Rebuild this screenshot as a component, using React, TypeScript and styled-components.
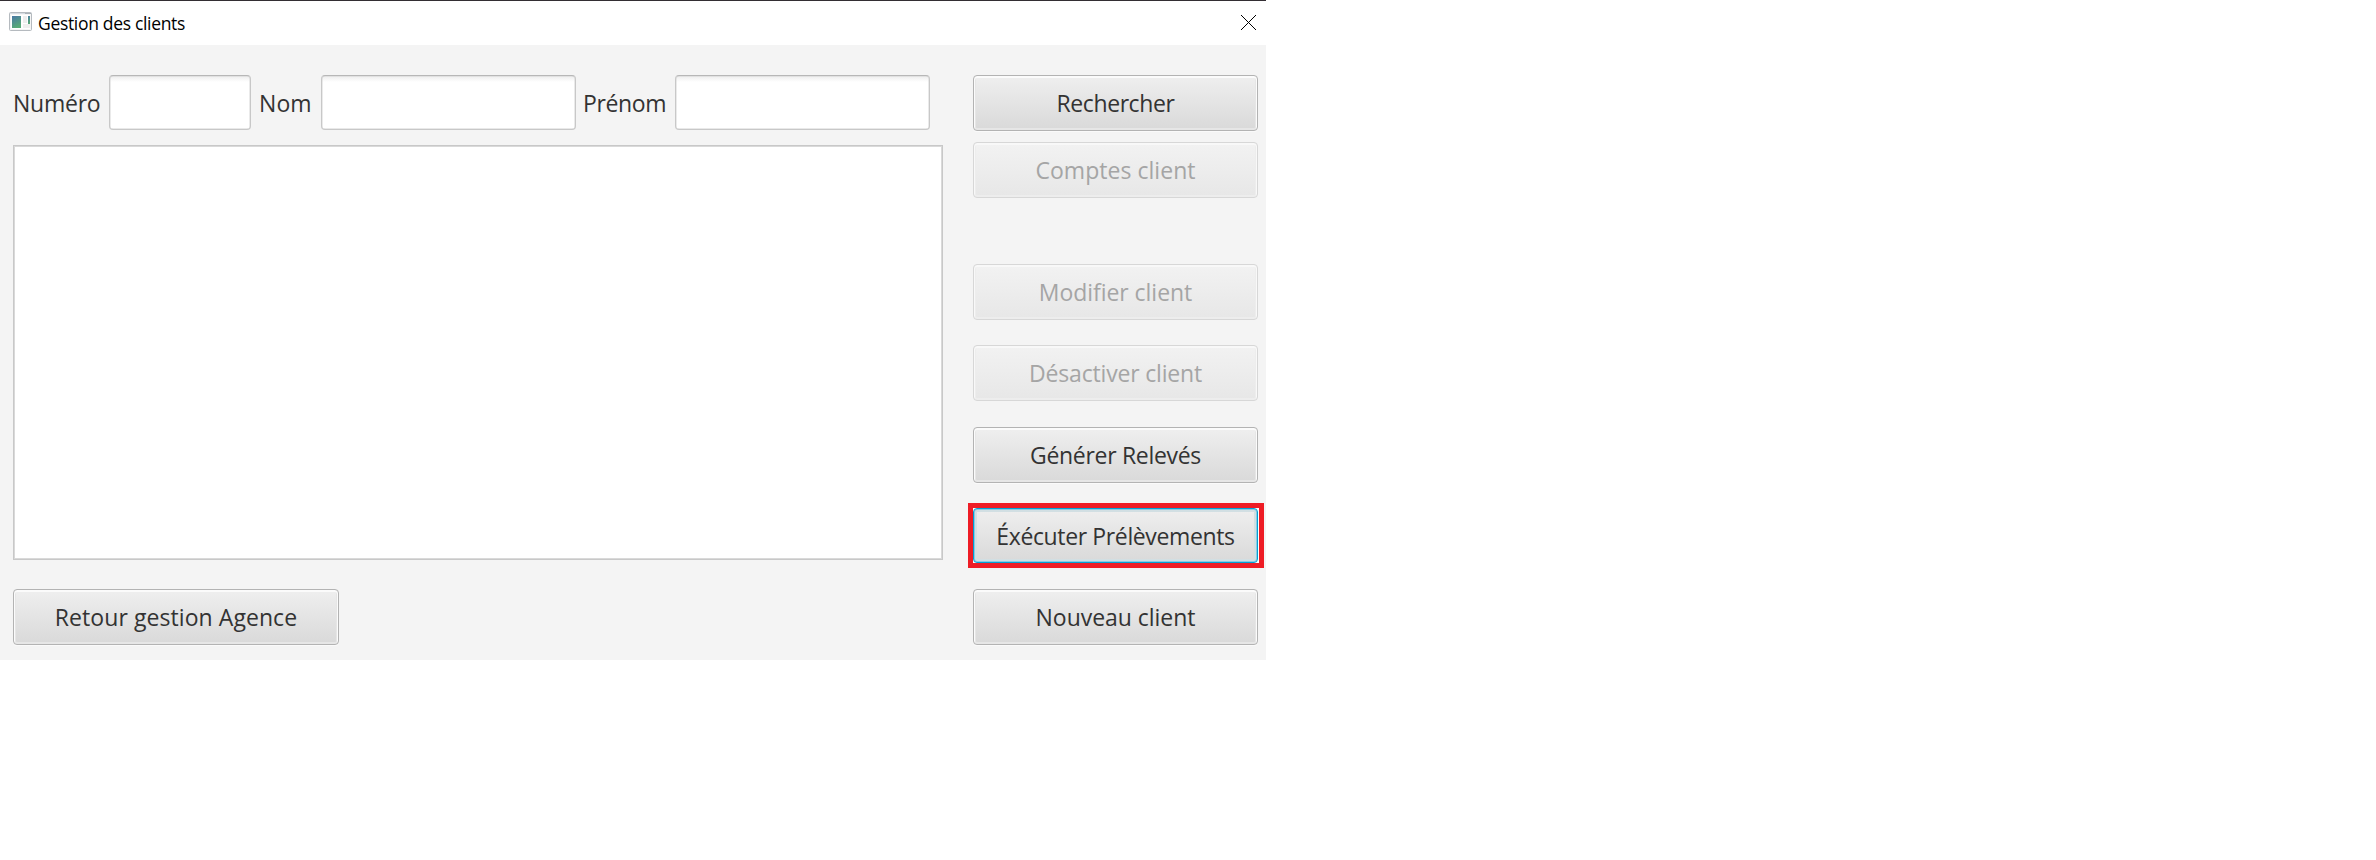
import React from "react";
import styled, { createGlobalStyle, css } from "styled-components";

const GlobalStyle = createGlobalStyle`
  * { box-sizing: border-box; }
  body { margin: 0; background: #fff; }
  button, input { font: inherit; color: inherit; }
`;

const Dialog = styled.main`
  width: 1266px;
  height: 660px;
  display: flex;
  flex-direction: column;
  background: #f4f4f4;
  color: #333;
  font-family: "Segoe UI", "Open Sans", sans-serif;
  font-size: 23px;
  font-weight: 370;
`;

const TitleBar = styled.header`
  height: 45px;
  flex: none;
  display: flex;
  align-items: flex-start;
  padding: 0 9px;
  border-top: 1px solid #332e33;
  background: #fff;
  color: #000;
`;

const Title = styled.h1<{ $spacing: number }>`
  margin: 10px auto 0 6px;
  font-size: 17.5px;
  font-weight: 370;
  line-height: 24px;
  letter-spacing: ${(p) => p.$spacing}px;
`;

const AppIcon = styled.svg`
  display: block;
  margin-top: 11px;
`;

const CloseIcon = styled.svg`
  display: block;
  margin-top: 13px;
`;

const Content = styled.div`
  flex: 1;
  display: flex;
  justify-content: space-between;
  padding: 30px 8px 15px 13px;
`;

const MainColumn = styled.section`
  width: 930px;
  display: flex;
  flex-direction: column;
  align-items: flex-start;
`;

const SearchRow = styled.div`
  display: flex;
  align-items: center;
  height: 55px;
  margin-bottom: 15px;
`;

const Label = styled.label<{ $width: number; $spacing: number }>`
  width: ${(p) => p.$width}px;
  flex: none;
  white-space: nowrap;
  line-height: 32px;
  letter-spacing: ${(p) => p.$spacing}px;
`;

const Field = styled.input<{ $width: number; $gap?: number }>`
  width: ${(p) => p.$width}px;
  height: 55px;
  margin: 0 ${(p) => p.$gap ?? 0}px 0 0;
  padding: 0 10px;
  border: 1px solid #c8c8c8;
  border-top-color: #b7b7b7;
  border-radius: 4px;
  outline: none;
  background: linear-gradient(#ededed, #fff 6px);
  box-shadow: inset 0 0 0 0.5px #d4d4d4;
`;

const ClientList = styled.div`
  width: 930px;
  height: 415px;
  margin-bottom: 29px;
  border: 1px solid #c8c8c8;
  box-shadow: inset 0 0 0 1px #d9d9d9;
  background: #fff;
`;

const Actions = styled.aside`
  width: 285px;
  display: flex;
  flex-direction: column;
`;

const ActionButton = styled.button<{
  $spacing: number;
  $top?: number;
  $width?: number;
  $focused?: boolean;
}>`
  width: ${(p) => p.$width ?? 285}px;
  height: 56px;
  flex: none;
  margin: ${(p) => p.$top ?? 0}px 0 0;
  padding: 0 0 1px;
  border: 1px solid #b3b3b3;
  border-radius: 4px;
  background: linear-gradient(#efefef, #d9d9d9);
  box-shadow: inset 0 1px 0 1px #fbfbfb, inset 0 0 0 2px #e6e6e6, 0 1px 0 #fafafa;
  white-space: nowrap;
  line-height: 32px;
  letter-spacing: ${(p) => p.$spacing}px;

  &:disabled {
    border-color: #d7d7d7;
    background: linear-gradient(#f2f2f2, #e7e7e7);
    box-shadow: inset 0 1px 0 1px #f8f8f8, inset 0 0 0 2px #ededed;
    color: #a5a5a5;
  }

  ${(p) =>
    p.$focused &&
    css`
      display: block;
      height: 55px;
      padding: 0;
      border-color: #039ed3;
      box-shadow: inset 0 0 0 1px #87cce3, inset 0 0 0 3px #d2dfe3;
    `}
`;

const Highlight = styled.div`
  margin: 20px -6px 21px -5px;
  padding-right: 1px;
  height: 65px;
  flex: none;
  border: 5px solid #ee1c25;
  background: #fff;
`;

export default function App() {
  return (
    <>
      <GlobalStyle />
      <Dialog>
        <TitleBar>
          <AppIcon width="23" height="19" viewBox="0 0 23 19">
            <defs>
              <linearGradient id="pane" x1="0" y1="0" x2="0.4" y2="1">
                <stop offset="0" stopColor="#4978a5" />
                <stop offset="1" stopColor="#58aa76" />
              </linearGradient>
            </defs>
            <rect x="0.5" y="0.5" width="22" height="18" rx="1" fill="#f5f5f5" stroke="#b5babf" />
            <path d="M1 1.5h15" stroke="#d6dbe2" />
            <path d="M16 1.5h6" stroke="#a9b1b8" />
            <rect x="2" y="3" width="19" height="14" fill="#fff" />
            <rect x="3" y="4" width="9" height="12" fill="url(#pane)" />
            <rect x="14" y="4" width="4" height="7" fill="#ededed" />
            <rect x="14" y="12" width="7" height="4" fill="#efefef" />
            <rect x="19" y="4" width="2" height="8" fill="url(#pane)" />
          </AppIcon>
          <Title $spacing={-0.32}>Gestion des clients</Title>
          <CloseIcon width="17" height="17" viewBox="0 0 17 17">
            <path d="M1 1L16 16M16 1L1 16" stroke="#000" strokeWidth="1" />
          </CloseIcon>
        </TitleBar>
        <Content>
          <MainColumn>
            <SearchRow>
              <Label htmlFor="numero" $width={96} $spacing={-0.25}>Numéro</Label>
              <Field id="numero" $width={142} $gap={8} />
              <Label htmlFor="nom" $width={62} $spacing={0.1}>Nom</Label>
              <Field id="nom" $width={255} $gap={7} />
              <Label htmlFor="prenom" $width={92} $spacing={-0.35}>Prénom</Label>
              <Field id="prenom" $width={255} />
            </SearchRow>
            <ClientList />
            <ActionButton $width={326} $spacing={0.07}>Retour gestion Agence</ActionButton>
          </MainColumn>
          <Actions>
            <ActionButton $spacing={-0.42}>Rechercher</ActionButton>
            <ActionButton $top={11} $spacing={0.03} disabled>Comptes client</ActionButton>
            <ActionButton $top={66} $spacing={-0.04} disabled>Modifier client</ActionButton>
            <ActionButton $top={25} $spacing={-0.18} disabled>Désactiver client</ActionButton>
            <ActionButton $top={26} $spacing={-0.3}>Générer Relevés</ActionButton>
            <Highlight>
              <ActionButton $focused $spacing={-0.37}>Éxécuter Prélèvements</ActionButton>
            </Highlight>
            <ActionButton $spacing={-0.04}>Nouveau client</ActionButton>
          </Actions>
        </Content>
      </Dialog>
    </>
  );
}
